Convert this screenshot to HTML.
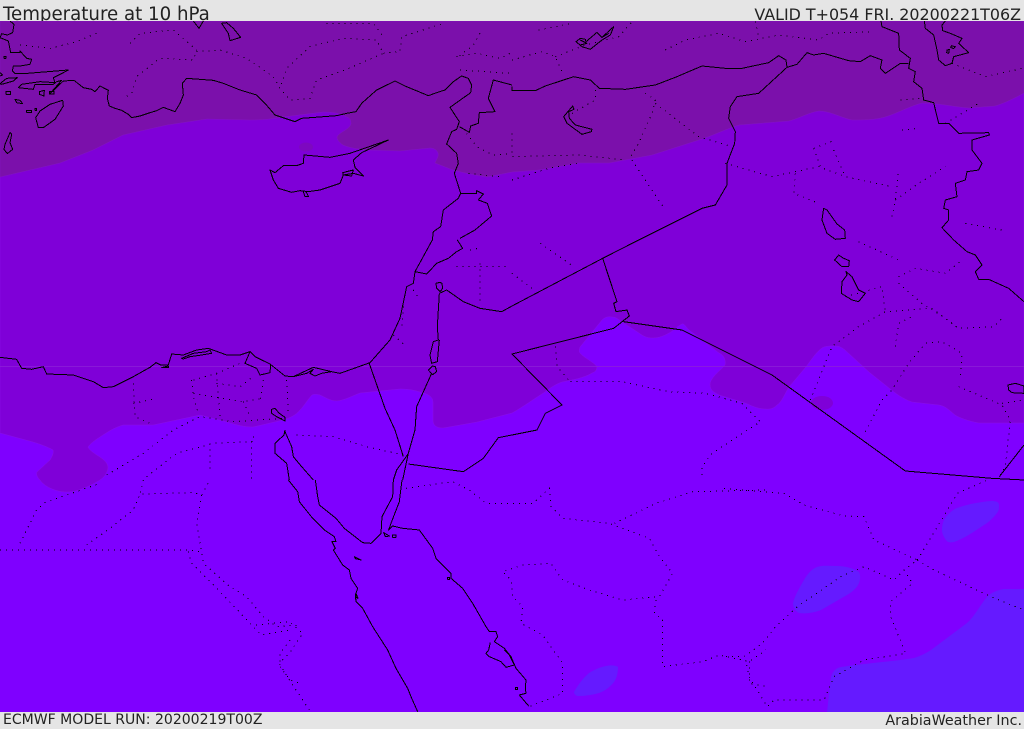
<!DOCTYPE html>
<html><head><meta charset="utf-8"><title>Temperature at 10 hPa</title>
<style>
html,body{margin:0;padding:0;width:1024px;height:729px;overflow:hidden;background:#e5e5e5}
.t{position:absolute;font-family:"DejaVu Sans","Liberation Sans",sans-serif;color:#222;white-space:nowrap;line-height:1}
svg{position:absolute;left:0;top:21px}
.c{fill:none;stroke:#000;stroke-width:1;vector-effect:non-scaling-stroke;stroke-linejoin:round;shape-rendering:crispEdges}
.d{fill:none;stroke:#000;stroke-width:1;stroke-dasharray:1 5;vector-effect:non-scaling-stroke;shape-rendering:crispEdges}
</style></head><body>
<div class="t" style="left:3px;top:6px;font-size:18.2px">Temperature at 10 hPa</div>
<div class="t" style="right:3px;top:7px;font-size:15.9px">VALID T+054 FRI. 20200221T06Z</div>
<div class="t" style="left:3px;top:713px;font-size:14.04px">ECMWF MODEL RUN: 20200219T00Z</div>
<div class="t" style="right:2px;top:714px;font-size:14.3px">ArabiaWeather Inc.</div>
<svg width="1024" height="691" viewBox="0 21 1024 691">
<rect x="0" y="21" width="1024" height="691" fill="#7f00ff"/>
<path fill="#7f00d8" stroke="#8a10e6" stroke-width=".5" d="M0,21H1024V423L979,423C968,421 960,418 955,415C948,409 945,406 939,405L912,402C903,399 895,393 889,388L869,372L845,350C840,346 838,346 834,346C829,346 825,346 822,348C815,353 810,362 805,368L789,387C785,393 782,402 777,405C772,410 768,409 765,409C758,409 750,405 745,403L719,395C714,392 710,391 710,384C711,377 720,371 725,365C726,360 724,355 719,353L689,330C686,327 684,323 682,324C676,327 672,332 669,333C662,337 657,338 652,338C647,338 643,336 639,333L622,322C617,318 615,317 612,317C607,316 604,318 602,320L580,347C579,350 579,352 580,353C584,358 594,362 597,367C596,372 594,372 592,373C584,378 572,380 562,382C556,384 550,388 545,392C535,398 523,407 512,413L477,422L443,428C436,428 433,425 433,420V402C433,397 428,394 423,393C415,390 408,389 400,389L360,393C352,396 345,400 337,401C330,401 325,397 320,395C316,394 314,394 312,395C308,399 304,406 300,410C296,415 290,418 283,420L253,427C245,427 236,425 227,422L200,415L153,425H123C113,428 106,433 100,437C95,440 90,444 88,447C89,450 95,454 100,457C104,460 108,463 108,468C107,474 104,477 100,480C90,486 78,492 67,492C55,492 44,486 40,480C37,477 36,474 37,472L50,460C52,457 54,453 53,450C48,447 40,444 33,442L0,433Z"/>
<path fill="#7b10ab" stroke="#8415c4" stroke-width=".5" d="M0,21H1024V93C1015,98 1005,103 995,106L969,108C955,107 938,103 922,103C910,106 898,113 885,117C874,120 864,120 852,120C842,118 830,111 819,111C810,112 800,118 789,121L739,125C726,129 712,136 699,140L652,155L609,163H579L539,170L512,172L487,177C475,175 464,173 453,170L435,163C436,160 439,157 438,153C437,150 434,148 430,148L400,151L367,150C358,149 350,148 343,145C340,143 337,140 337,137C339,132 349,130 351,124C351,120 350,118 347,117C340,113 332,112 323,112L283,117C272,119 262,120 250,120L207,119L167,125L123,135L93,150L60,163L0,177Z"/>
<ellipse cx="306" cy="147" rx="7" ry="4.5" fill="#7d08c0"/>
<ellipse cx="822" cy="403" rx="11" ry="7" fill="#7f00d8"/>
<path fill="#651aff" d="M827,712L831,677C833,671 836,668 841,667C865,663 890,662 914,658C920,656 925,654 931,650L967,623C975,616 980,605 987,597C992,592 998,590 1004,589H1024V712Z"/>
<path fill="#651aff" d="M942,530C942,526 943,522 944,520C947,515 952,510 957,508C968,504 980,502 991,501C996,501 999,502 999,505C999,508 999,511 997,513C993,518 989,522 984,525C975,531 965,538 954,542C950,543 947,542 946,540C944,537 942,534 942,530Z"/>
<path fill="#651aff" d="M793,603C795,595 800,587 804,580C808,573 812,569 817,567C823,565 830,566 837,566C845,566 853,568 859,572C861,576 860,580 859,583C857,588 852,592 847,595L821,610C813,613 806,614 799,613C795,611 793,607 793,603Z"/>
<path fill="#651aff" d="M574,692C578,685 583,678 589,673C594,670 600,667 606,666C611,665 615,665 618,667C618,672 617,678 614,682C610,687 605,691 599,693C592,695 585,696 578,696C576,696 574,694 574,692Z"/>
<rect x="0" y="366" width="1024" height="1" fill="#8c20d8" opacity=".75"/>

<g transform="translate(0,21) scale(.33333)">
<path class="c" d="M30,0L42,10 38,35 22,42 5,38 0,50 25,60 32,95 60,95 60,90 80,112 95,115 90,130 60,135 40,135 37,150 45,158 70,158 205,147 190,155 160,170 165,185 120,182 65,190 55,200 100,205 105,190 160,190 170,182 185,178 150,218 190,180 222,178 250,200 275,205 285,212 300,195 325,208 322,232 328,255 345,262 365,268 385,280 395,290 420,285 450,275 470,269"/>
<path class="c" d="M188,238L150,250 120,270 107,290 115,320 130,320 165,295 190,255ZM15,370L30,335 35,340 30,365 38,385 22,398 12,385ZM0,188L20,172 52,170 40,180 5,190ZM18,212H32V220H18ZM45,235L60,238 68,248 50,245ZM80,268H95V274H80ZM118,212L133,208 132,225 118,220ZM148,212H162V219H148ZM0,155L8,162 0,165M12,106H18V112H12ZM105,263H110V268H105Z"/>
</g>
<g transform="translate(0,0) scale(.33333)">
<path class="d" d="M60,135L150,145 230,125 290,100M390,130L420,100 520,90 590,150 580,180 480,175 410,230 395,280 370,295M590,155L660,150 740,175 820,230 840,265 870,300 930,295 950,240 1035,210 1150,160 1130,120 1030,115 930,140 860,205 840,265M1150,160L1200,155 1205,110 1270,90 1330,70M1370,170L1430,160 1500,175 1530,160M1380,210L1530,220M1440,100L1420,135 1375,170M1400,400L1430,440 1480,465 1536,460M1405,520L1500,530M980,70L1120,70 1150,110"/>
<path class="c" d="M470,332L490,322 525,335 540,310 550,285 547,250 560,235 640,241 670,250 720,270 770,285 795,310 825,345 885,365 905,355 1010,347 1040,340 1068,335 1085,310 1130,270 1185,243 1215,258 1285,287 1310,278 1335,270 1360,245 1385,228 1405,235 1415,255 1412,278 1350,322 1378,365 1370,388 1355,395 1340,432 1370,460 1375,490 1363,520 1382,580 1375,595 1330,630 1322,680 1300,695 1297,720"/>
<path class="c" d="M1382,580L1430,580 1430,572 1450,582 1435,600 1462,610 1475,648 1425,690 1380,715M1378,380L1408,397 1412,378 1435,370 1438,338 1485,335 1465,295 1480,240 1536,255"/>
<path class="c" d="M810,510L825,518 850,497 890,497 910,490 912,465 990,472 1050,460 1165,420 1085,458 1060,480 1065,502 1090,528 1060,520 1030,525 1020,550 960,570 925,575 900,572 875,577 835,565 820,540ZM910,575L915,590 926,590 918,575M1028,518L1060,510 1055,528 1030,525Z"/>
<path class="c" d="M665,70L680,68 700,85 722,112 690,122 685,100ZM580,63L597,85 610,63"/>
</g>
<g transform="translate(512,0) scale(.33333)">
<path class="d" d="M80,90L180,70M0,180L90,155 130,170 150,215M130,170L220,135 320,110 360,65M460,150L520,120 620,100 700,125 800,105 920,120 950,100 1080,95M730,65L740,110M250,270L250,300 180,340M400,280L430,300 420,340 380,430 350,480M430,310L560,410 660,440M0,400L0,470 200,465 340,480M360,480L460,630M640,490L780,530 920,500 1000,530 1140,560M905,445L970,420M905,445L925,500M965,450L1000,530M1170,390L1220,385M1150,600L1220,550 1300,500M1300,370L1400,310M1165,300L1235,295M1320,190L1420,230 1530,205M850,520L845,580 920,610M0,540L110,505 200,490M1140,650L1150,600 1160,510M1360,670L1470,690"/>
<path class="c" d="M0,260L0,272 70,272 100,258 185,230 235,240 262,265 340,268 430,255 490,232 570,198 640,205 690,205 770,188 800,167 822,180 825,202 740,280 675,290 655,320 650,355 670,395 668,430 645,490 645,555 610,615 570,625 380,720"/>
<path class="c" d="M825,202L855,193 885,158 905,165 935,160 1010,182 1045,185 1075,167 1110,180 1105,205 1120,220 1165,190 1190,190"/>
<path class="c" d="M1107,63L1110,80 1160,100 1162,150 1195,175 1190,205 1210,215 1205,245 1230,265 1235,300 1265,308 1280,370 1310,370 1340,400 1430,398 1432,405 1380,420 1380,450 1410,490 1400,510 1365,515 1360,540 1330,550 1335,590 1300,600 1295,625 1310,630 1310,660 1290,683 1325,720"/>
<path class="c" d="M1237,63L1240,85 1265,105 1275,150 1280,180 1300,197 1320,190 1325,170 1370,158 1340,130 1350,115 1315,100 1292,92 1290,75 1300,63M1305,150L1312,148 1310,160 1304,158ZM1318,137L1330,140 1325,146 1316,142Z"/>
<path class="c" d="M192,125L205,115 220,118 222,125 255,97 270,112 305,80 295,105 270,120 235,148 210,140ZM205,120L225,130 205,135M270,112L290,100"/>
<path class="c" d="M182,318L186,328 170,335 172,355 190,375 240,388 238,395 210,403 165,370 155,350Z"/>
<path class="c" d="M935,625L930,660 945,700 970,718 1000,715 998,690 975,672 945,630Z"/>
</g>
<g transform="translate(0,240) scale(.33333)">
<path class="d" d="M320,705L430,640 520,570 600,530 700,545 850,535M440,710L530,640 640,610 760,605 760,580M400,430L405,530 460,555M400,490L470,475M575,420L580,470 595,520M580,420L650,400 720,370M650,400L655,470 660,530M580,460L640,470 730,485 790,475M790,420L780,485M730,485L750,530M860,420L865,520M650,430L720,440 760,410M890,585L1000,590 1100,620 1210,645M630,610L630,700M755,605L755,720M1240,150L1260,180M1370,80L1520,80M1440,70L1440,190M1180,285L1220,320M1210,200L1205,270M1410,30L1435,25"/>
<path class="c" d="M1297,0L1245,95 1240,130 1220,140 1200,235 1170,300 1110,368 1020,400 995,395 940,382 880,410 855,408 810,372 765,350 750,335 720,345 680,345 625,325 590,330 550,345 515,342 505,375 482,375 468,368 450,382 400,410 340,440 310,443 280,425 220,405 140,402 130,380 95,388 65,385 50,358 0,352"/>
<path class="c" d="M1245,95L1280,102 1310,70 1345,55 1370,35 1388,25 1372,0M1107,368L1155,505 1185,570 1210,650M1320,127L1308,130 1310,145 1320,155 1328,145 1326,130ZM1318,160L1312,260 1315,300 1300,305 1290,345 1295,370 1312,365 1318,300M1297,378L1285,390 1298,404 1310,395 1306,380ZM1295,400L1250,500 1245,570 1225,640 1208,720M1318,160L1340,150 1390,185 1440,205 1505,215 1536,198M1536,585L1495,593 1450,655 1390,695 1225,672"/>
<path class="c" d="M545,355L580,340 620,335 630,330 635,340 605,345 570,350 550,357ZM750,335L735,370 770,385 780,405 810,398 812,375M880,410L920,400 940,388 930,400 945,408 965,400 995,395M485,383L505,378 505,383ZM815,508L825,505 838,520 855,532 855,543 830,530 815,520ZM855,570L852,585 825,610 825,640 860,670 868,720M855,575L875,620 880,650 905,680 940,720M1225,640L1215,655 1190,690 1180,720"/>
</g>
<g transform="translate(512,240) scale(.33333)">
<path class="d" d="M85,10L185,80M0,100L60,145M130,320L135,380 170,420M175,425L330,425 470,455 580,460 690,490 745,545 600,640 570,680 570,720M895,480L960,320 1040,260 1120,215 1260,205 1340,265 1445,260 1470,235M1060,575L1110,480 1140,450 1190,370 1240,310 1290,305 1350,340 1345,410M1150,320L1160,250 1200,230M1160,110L1210,85 1300,100 1350,60M1000,170L1110,140 1120,215M1160,130L1230,190 1300,235 1340,265M1340,440L1470,495 1495,540 1480,680 1465,705M1470,490L1536,480M1040,5L1160,60"/>
<path class="c" d="M380,0L272,55 0,198M272,55L315,185 305,190 312,215 345,210 352,228 305,265 0,342 150,495 100,520 75,570 0,585M335,245L510,270 780,405 1180,693 1440,715 1536,720M1462,710L1536,615M1325,0L1365,35 1390,45 1410,75 1390,95 1400,118 1430,118 1490,145 1536,185M968,60L980,45 995,55 1012,62 1010,80 990,80ZM1002,95L1005,105 990,125 988,160 1020,180 1040,185 1060,160 1040,150 1020,110ZM1488,435L1510,430 1536,438 1536,460 1500,458 1490,450Z"/>
</g>
<g transform="translate(256,480) scale(.33333)">
<path class="d" d="M450,25L590,5 640,30 690,70 830,70 880,25 885,80 920,115 1060,130 1180,175 1210,230 1250,280 1210,350 1100,360 1000,330 920,300 885,250 800,255 740,275 765,300 770,350 800,380 795,430 860,465 920,550 920,640 820,680M1075,130L1200,70 1310,35 1530,30M1200,360L1195,400 1220,420 1220,560 1340,545 1390,525 1480,545 1530,510M1480,545L1480,610 1536,620M0,435L100,425 140,460 100,520 70,550 100,600 160,690"/>
<path class="c" d="M97,0L125,35 130,65 170,115 205,150 235,170 240,185 228,185 238,205 232,210 260,255 280,270 285,295 305,325 298,345 300,365 320,385 350,440 395,510 420,565 455,625 465,650 485,695"/>
<path class="c" d="M178,0L185,50 190,75 240,115 265,145 320,188 345,190 375,160 378,110 410,50 412,0M438,0L430,65 405,130 398,150 410,138 440,145 490,150 530,205 540,235 585,280 585,295 620,325 650,370 690,440 700,455 720,455 725,470 715,485 745,505 765,530 780,565 810,600 808,625 810,640 790,645 818,678"/>
<path class="c" d="M703,487L698,510 690,520 700,530 735,545 750,562 775,555 760,525 745,510M383,158L400,168 388,170ZM410,165H420V172H410ZM295,230L315,240 298,236ZM575,292H581V298H575ZM778,622H785V628H778ZM300,340L306,355 300,352Z"/>
</g>
<g transform="translate(0,480) scale(.33333)">
<path class="d" d="M0,210H560L605,215M60,190L110,90 135,68 300,10M260,195L330,145 400,90 420,42 580,38 605,45 630,0M605,45L590,130 605,215 610,250 690,320 740,350 790,410 830,440 900,435M565,215L575,250 660,335 750,430 785,465 870,450M870,480L840,520 840,560 870,600 900,610M430,0L420,42"/>
</g>
<g transform="translate(724,480) scale(.33333)">
<path class="d" d="M0,25L180,40 240,75 360,108 420,110 450,180 580,240 540,270 510,300 420,260 350,290 220,380 155,440 115,490 60,530 0,530M580,240L700,40 790,0M580,240L620,265 800,350 900,390M540,270L565,310 500,365 500,410 545,520 420,540 330,590 300,660 150,660 130,680 75,590 65,540"/>
</g>
</svg>
</body></html>
